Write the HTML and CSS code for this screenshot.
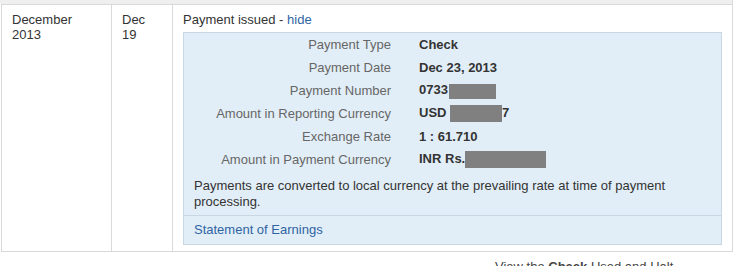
FILE: index.html
```html
<!DOCTYPE html>
<html lang="en">

<head>
  <title>Payment History</title>
  <link rel="stylesheet" href="styles.css">
</head>

<body>
  <div class="topband"></div>
  <table class="history">
    <tr>
      <td class="month">December<br>2013</td>
      <td class="day">Dec<br>19</td>
      <td class="detail">
        <div class="status">Payment issued - <a href="#">hide</a></div>
        <div class="paybox">
          <table class="facts">
            <tr>
              <td class="label">Payment Type</td>
              <td class="value">Check</td>
            </tr>
            <tr>
              <td class="label">Payment Date</td>
              <td class="value">Dec 23, 2013</td>
            </tr>
            <tr>
              <td class="label">Payment Number</td>
              <td class="value">0733<span class="redact r1"></span></td>
            </tr>
            <tr>
              <td class="label">Amount in Reporting Currency</td>
              <td class="value">USD <span class="redact r2"></span>7</td>
            </tr>
            <tr>
              <td class="label">Exchange Rate</td>
              <td class="value">1 : 61.710</td>
            </tr>
            <tr>
              <td class="label">Amount in Payment Currency</td>
              <td class="value">INR Rs.<span class="redact r3"></span></td>
            </tr>
          </table>
          <p class="note">Payments are converted to local currency at the prevailing rate at time of payment processing.</p>
          <div class="links"><a href="#">Statement of Earnings</a></div>
        </div>
      </td>
    </tr>
  </table>
  <div class="footer">View the <b>Check</b> Used and Halt</div>
</body>

</html>
```

FILE: styles.css
```css
body {
  margin: 0;
  font-family: "Liberation Sans", Arial, sans-serif;
  font-size: 13px;
  color: #333333;
  background: #ffffff;
}

a {
  color: #2f64a3;
  text-decoration: none;
}

.topband {
  height: 4px;
  background: #efefef;
  border-right: 1px solid #dddddd;
  width: 732px;
}

.history {
  border-collapse: collapse;
  margin-left: 1px;
  width: 732px;
}

.history > tbody > tr > td {
  border: 1px solid #d9d9d9;
  vertical-align: top;
  padding: 7px 10px 6px 10px;
  line-height: 15px;
}

.month {
  width: 89px;
}

.day {
  width: 40px;
}

.status {
  line-height: 15px;
}

.paybox {
  margin-top: 5px;
  background: #e2eef7;
  border: 1px solid #c8d7e4;
}

.facts {
  border-collapse: collapse;
}

.facts td {
  padding: 0;
  height: 23px;
  line-height: 15px;
}

.label {
  width: 207px;
  text-align: right;
  color: #666666;
}

.value {
  padding-left: 28px !important;
  font-weight: bold;
  color: #333333;
}

.redact {
  display: inline-block;
  background: #808080;
  vertical-align: middle;
}

.r1 {
  width: 47px;
  height: 15px;
  margin-left: 1px;
}

.r2 {
  width: 52px;
  height: 17px;
}

.r3 {
  width: 81px;
  height: 17px;
}

.note {
  margin: 7px 0 0 0;
  padding: 0 10px 5px 10px;
  line-height: 16px;
  border-bottom: 1px solid #c8d7e4;
}

.links {
  padding: 6px 10px 6px 10px;
  line-height: 16px;
}

.footer {
  padding: 7px 0 0 495px;
  line-height: 15px;
  color: #444444;
}
```
